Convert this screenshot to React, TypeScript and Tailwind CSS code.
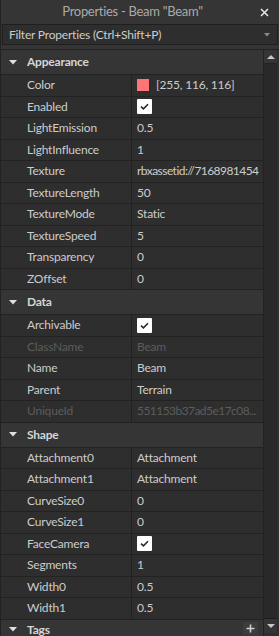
import React from "react";

type Prop = {
  name: string;
  value?: string;
  kind?: "text" | "check" | "color";
  disabled?: boolean;
  tight?: boolean;
};

const sections: { title: string; rows: Prop[] }[] = [
  {
    title: "Appearance",
    rows: [
      { name: "Color", value: "[255, 116, 116]", kind: "color" },
      { name: "Enabled", kind: "check" },
      { name: "LightEmission", value: "0.5" },
      { name: "LightInfluence", value: "1" },
      { name: "Texture", value: "rbxassetid://7168981454", tight: true },
      { name: "TextureLength", value: "50" },
      { name: "TextureMode", value: "Static" },
      { name: "TextureSpeed", value: "5" },
      { name: "Transparency", value: "0" },
      { name: "ZOffset", value: "0" },
    ],
  },
  {
    title: "Data",
    rows: [
      { name: "Archivable", kind: "check" },
      { name: "ClassName", value: "Beam", disabled: true },
      { name: "Name", value: "Beam" },
      { name: "Parent", value: "Terrain" },
      { name: "UniqueId", value: "551153b37ad5e17c08...", disabled: true, tight: true },
    ],
  },
  {
    title: "Shape",
    rows: [
      { name: "Attachment0", value: "Attachment" },
      { name: "Attachment1", value: "Attachment" },
      { name: "CurveSize0", value: "0" },
      { name: "CurveSize1", value: "0" },
      { name: "FaceCamera", kind: "check" },
      { name: "Segments", value: "1" },
      { name: "Width0", value: "0.5" },
      { name: "Width1", value: "0.5" },
    ],
  },
];

function Arrow() {
  return (
    <svg width="8" height="5" viewBox="0 0 8 5" className="shrink-0">
      <path d="M0 0 H8 L4 4.5 Z" fill="#e0e0e0" />
    </svg>
  );
}

function SectionHeader({ title }: { title: string }) {
  return (
    <div className="h-[25px] flex items-center bg-[#353535] border-b border-[#222222]">
      <div className="w-[26px] pl-[8px] flex items-center">
        <Arrow />
      </div>
      <span className="font-bold text-[#d6d6d6]">{title}</span>
    </div>
  );
}

function Check() {
  return (
    <div className="w-[15px] h-[15px] bg-white rounded-[1px] flex items-center justify-center">
      <svg width="9" height="7" viewBox="0 0 9 7">
        <path d="M1 3.6 L3.4 5.8 L8 1.2" fill="none" stroke="#2a2a2a" strokeWidth="1.6" />
      </svg>
    </div>
  );
}

function Row({ p }: { p: Prop }) {
  const txt = p.disabled ? "text-[#5c5c5c]" : "text-[#cccccc]";
  return (
    <div className="h-[21.5px] flex border-b border-[#222222] bg-[#2e2e2e]">
      <div className={`w-[131px] pl-[26px] flex items-center border-r border-[#222222] ${txt}`}>
        {p.name}
      </div>
      <div
        className={`flex-1 pl-[5px] flex items-center whitespace-nowrap overflow-hidden ${txt} ${
          p.tight ? "tracking-[-0.55px]" : ""
        }`}
      >
        {p.kind === "check" && <Check />}
        {p.kind === "color" && (
          <>
            <span className="w-[12px] h-[12px] bg-[#ff7474] mr-[7px]" />
            <span>{p.value}</span>
          </>
        )}
        {(!p.kind || p.kind === "text") && <span>{p.value}</span>}
      </div>
    </div>
  );
}

export default function App() {
  return (
    <div
      className="w-[279px] h-[636px] bg-[#353535] flex flex-col overflow-hidden text-[12px] tracking-[-0.2px] border-l border-[#222222]"
      style={{ fontFamily: "Lato, 'Open Sans', sans-serif" }}
    >
      {/* title */}
      <div className="h-[24px] shrink-0 flex items-center relative">
        <span className="flex-1 text-center text-[13px] tracking-[-0.3px] text-[#aaaaaa] pr-[15px]">
          Properties - Beam "Beam"
        </span>
        <svg width="9" height="9" viewBox="0 0 9 9" className="absolute right-[10px] top-[8px]">
          <path d="M1 1 L8 8 M8 1 L1 8" stroke="#e6e6e6" strokeWidth="1.5" />
        </svg>
      </div>

      {/* filter */}
      <div className="h-[21px] shrink-0 mx-[1px] border border-[#1f1f1f] bg-[#2e2e2e] flex items-center pl-[6px] pr-[7px]">
        <span className="flex-1 text-[#cccccc]">Filter Properties (Ctrl+Shift+P)</span>
        <svg width="6" height="4" viewBox="0 0 6 4">
          <path d="M0 0 H6 L3 3.5 Z" fill="#8a8a8a" />
        </svg>
      </div>

      <div className="h-[4px] shrink-0" />

      {/* grid */}
      <div className="flex-1 flex border-t border-[#222222] min-h-0">
        <div className="flex-1 flex flex-col overflow-hidden">
          {sections.map((s) => (
            <div key={s.title} className="shrink-0">
              <SectionHeader title={s.title} />
              {s.rows.map((r) => (
                <Row key={r.name} p={r} />
              ))}
            </div>
          ))}
          <div className="h-[20px] shrink-0 flex items-center bg-[#353535] relative">
            <div className="w-[26px] pl-[8px] flex items-center">
              <Arrow />
            </div>
            <span className="font-bold text-[#d6d6d6]">Tags</span>
            <div className="absolute right-[5px] top-[2px] w-[15px] h-[13px] bg-[#3c3c3c] flex items-center justify-center">
              <svg width="9" height="9" viewBox="0 0 9 9">
                <path d="M4.5 0.5 V8.5 M0.5 4.5 H8.5" stroke="#cfcfcf" strokeWidth="1.6" />
              </svg>
            </div>
          </div>
        </div>

        {/* scrollbar */}
        <div className="w-[16px] shrink-0 flex flex-col border-l border-[#222222] bg-[#2e2e2e] pr-[2px]">
          <div className="h-[14px] bg-[#353535] flex items-center justify-center border-b border-[#222222]">
            <svg width="8" height="4" viewBox="0 0 8 4">
              <path d="M0 4 H8 L4 0 Z" fill="#c8c8c8" />
            </svg>
          </div>
          <div className="flex-1 bg-[#292929] border-b border-[#1e1e1e]" />
          <div className="h-[14px] bg-[#353535] flex items-center justify-center mb-[3px]">
            <svg width="8" height="4" viewBox="0 0 8 4">
              <path d="M0 0 H8 L4 4 Z" fill="#c8c8c8" />
            </svg>
          </div>
        </div>
      </div>
    </div>
  );
}
